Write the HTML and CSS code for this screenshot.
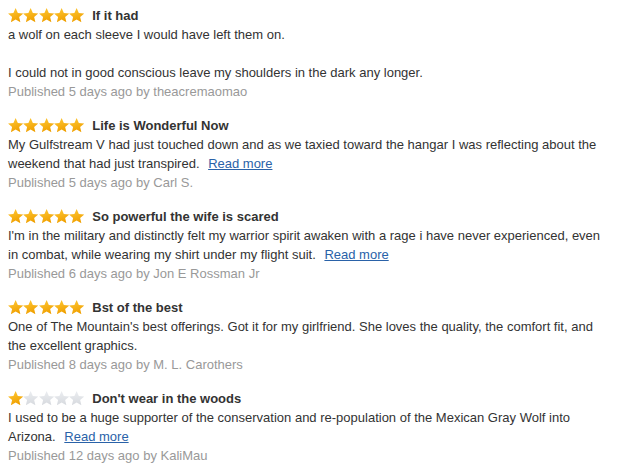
FILE: index.html
```html
<!DOCTYPE html>
<html>
<head>
<meta charset="utf-8">
<link rel="stylesheet" href="styles.css">
</head>
<body>
<svg class="defs" width="0" height="0">
  <defs>
    <linearGradient id="gold" x1="0" y1="0" x2="0.4" y2="1">
      <stop offset="0" stop-color="#ffcb3a"/>
      <stop offset="1" stop-color="#f0a000"/>
    </linearGradient>
    <linearGradient id="grey" x1="0" y1="0" x2="0" y2="1">
      <stop offset="0" stop-color="#eceef1"/>
      <stop offset="1" stop-color="#d6d9de"/>
    </linearGradient>
    <symbol id="star" viewBox="1 1 22 21">
      <path d="M12 1l3.2 7.2 7.8.7-5.9 5.2 1.8 7.7L12 17.8 5.1 21.8l1.8-7.7L1 8.9l7.8-.7z"/>
    </symbol>
  </defs>
</svg>

<div class="reviews">
  <div class="review">
    <div class="head">
      <span class="stars"><svg class="on"><use href="#star"/></svg><svg class="on"><use href="#star"/></svg><svg class="on"><use href="#star"/></svg><svg class="on"><use href="#star"/></svg><svg class="on"><use href="#star"/></svg></span>
      <span class="title">If it had</span>
    </div>
    <p class="body">a wolf on each sleeve I would have left them on.</p>
    <p class="body blank">&nbsp;</p>
    <p class="body">I could not in good conscious leave my shoulders in the dark any longer.</p>
    <p class="meta">Published 5 days ago by theacremaomao</p>
  </div>

  <div class="review">
    <div class="head">
      <span class="stars"><svg class="on"><use href="#star"/></svg><svg class="on"><use href="#star"/></svg><svg class="on"><use href="#star"/></svg><svg class="on"><use href="#star"/></svg><svg class="on"><use href="#star"/></svg></span>
      <span class="title">Life is Wonderful Now</span>
    </div>
    <p class="body">My Gulfstream V had just touched down and as we taxied toward the hangar I was reflecting about the weekend that had just transpired. <a href="#" class="more">Read more</a></p>
    <p class="meta">Published 5 days ago by Carl S.</p>
  </div>

  <div class="review">
    <div class="head">
      <span class="stars"><svg class="on"><use href="#star"/></svg><svg class="on"><use href="#star"/></svg><svg class="on"><use href="#star"/></svg><svg class="on"><use href="#star"/></svg><svg class="on"><use href="#star"/></svg></span>
      <span class="title">So powerful the wife is scared</span>
    </div>
    <p class="body">I'm in the military and distinctly felt my warrior spirit awaken with a rage i have never experienced, even in combat, while wearing my shirt under my flight suit. <a href="#" class="more">Read more</a></p>
    <p class="meta">Published 6 days ago by Jon E Rossman Jr</p>
  </div>

  <div class="review">
    <div class="head">
      <span class="stars"><svg class="on"><use href="#star"/></svg><svg class="on"><use href="#star"/></svg><svg class="on"><use href="#star"/></svg><svg class="on"><use href="#star"/></svg><svg class="on"><use href="#star"/></svg></span>
      <span class="title">Bst of the best</span>
    </div>
    <p class="body">One of The Mountain's best offerings. Got it for my girlfriend. She loves the quality, the comfort fit, and the excellent graphics.</p>
    <p class="meta">Published 8 days ago by M. L. Carothers</p>
  </div>

  <div class="review">
    <div class="head">
      <span class="stars"><svg class="on"><use href="#star"/></svg><svg class="off"><use href="#star"/></svg><svg class="off"><use href="#star"/></svg><svg class="off"><use href="#star"/></svg><svg class="off"><use href="#star"/></svg></span>
      <span class="title">Don't wear in the woods</span>
    </div>
    <p class="body">I used to be a huge supporter of the conservation and re-population of the Mexican Gray Wolf into Arizona. <a href="#" class="more">Read more</a></p>
    <p class="meta">Published 12 days ago by KaliMau</p>
  </div>
</div>
</body>
</html>
```

FILE: styles.css
```css
html, body {
  margin: 0;
  padding: 0;
  background: #ffffff;
}

body {
  font-family: Arial, "Liberation Sans", sans-serif;
  font-size: 13px;
  color: #333333;
}

.defs {
  position: absolute;
  width: 0;
  height: 0;
  overflow: hidden;
}

.reviews {
  width: 602px;
  padding: 6px 8px 0 8px;
}

.review {
  margin-bottom: 15px;
}

.head {
  display: flex;
  align-items: center;
  height: 19px;
}

.stars {
  display: flex;
  gap: 0;
  margin-right: 8px;
}

.stars svg {
  width: 15.25px;
  height: 14.5px;
  display: block;
}

.stars svg.on {
  fill: url(#gold);
}

.stars svg.off {
  fill: url(#grey);
}

.title {
  font-weight: bold;
  color: #333333;
}

.body {
  margin: 0;
  line-height: 19px;
}

.meta {
  margin: 0;
  line-height: 19px;
  color: #999999;
}

.more {
  color: #2a62a8;
  text-decoration: underline;
  margin-left: 5px;
}
```
